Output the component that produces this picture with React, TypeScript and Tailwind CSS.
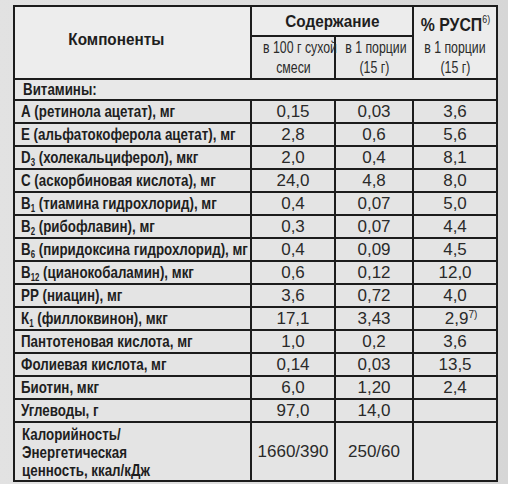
import React from "react";

type Row = {
  label: React.ReactNode;
  a: string;
  b: string;
  c?: React.ReactNode;
};

// the print uses a narrow grotesque; squeeze Liberation Sans to match
const Narrow = ({
  children,
  className = "origin-left scale-x-[0.785]",
}: {
  children: React.ReactNode;
  className?: string;
}) => <span className={`inline-block whitespace-nowrap ${className}`}>{children}</span>;

const mid = "origin-center scale-x-[0.77]";

const Sub = ({ children }: { children: React.ReactNode }) => (
  <span className="relative top-[3px] text-[10px]">{children}</span>
);

const rows: Row[] = [
  { label: "А (ретинола ацетат), мг", a: "0,15", b: "0,03", c: "3,6" },
  { label: "Е (альфатокоферола ацетат), мг", a: "2,8", b: "0,6", c: "5,6" },
  { label: <>D<Sub>3</Sub> (холекальциферол), мкг</>, a: "2,0", b: "0,4", c: "8,1" },
  { label: "С (аскорбиновая кислота), мг", a: "24,0", b: "4,8", c: "8,0" },
  { label: <>В<Sub>1</Sub> (тиамина гидрохлорид), мг</>, a: "0,4", b: "0,07", c: "5,0" },
  { label: <>В<Sub>2</Sub> (рибофлавин), мг</>, a: "0,3", b: "0,07", c: "4,4" },
  { label: <>В<Sub>6</Sub> (пиридоксина гидрохлорид), мг</>, a: "0,4", b: "0,09", c: "4,5" },
  { label: <>В<Sub>12</Sub> (цианокобаламин), мкг</>, a: "0,6", b: "0,12", c: "12,0" },
  { label: "РР (ниацин), мг", a: "3,6", b: "0,72", c: "4,0" },
  {
    label: <>К<Sub>1</Sub> (филлоквинон), мкг</>,
    a: "17,1",
    b: "3,43",
    c: (
      <span className="pl-[12px]">
        2,9<span className="relative -top-[6px] text-[10px]">7)</span>
      </span>
    ),
  },
  { label: "Пантотеновая кислота, мг", a: "1,0", b: "0,2", c: "3,6" },
  { label: "Фолиевая кислота, мг", a: "0,14", b: "0,03", c: "13,5" },
  { label: "Биотин, мкг", a: "6,0", b: "1,20", c: "2,4" },
  { label: "Углеводы, г", a: "97,0", b: "14,0" },
];

const cell = "border-2 border-[#1c1c1c] p-0";
const label = "font-['Liberation_Sans',sans-serif] font-bold text-[17px] text-[#1e1e1e]";
const num = "font-['Liberation_Sans',sans-serif] text-[17px] text-[#2a2a2a] text-center leading-none";
const small = "font-['Liberation_Sans',sans-serif] text-[16px] leading-[20px] text-[#2a2a2a]";

export default function App() {
  return (
    <div className="h-[484px] w-[508px] overflow-hidden bg-gradient-to-r from-[#e2e2e2] via-[#dedede] to-[#d6d6d6] pl-[13px] pt-[5px]">
      <table className="w-[483px] table-fixed border-collapse bg-[#e4e4e4]">
        <colgroup>
          <col className="w-[237px]" />
          <col className="w-[84px]" />
          <col className="w-[78px]" />
          <col className="w-[84px]" />
        </colgroup>
        <tbody>
          <tr className="h-[30px]">
            <td
              rowSpan={2}
              className={`${cell} ${label} bg-[#ededed] pb-[6px] pr-[32px] text-center text-[16px]`}
            >
              <Narrow className="origin-center scale-x-[0.9]">Компоненты</Narrow>
            </td>
            <td
              colSpan={2}
              className={`${cell} ${label} bg-[#ececec] pt-[2px] text-center text-[16px]`}
            >
              <Narrow className="origin-center scale-x-[0.9]">Содержание</Narrow>
            </td>
            <td rowSpan={2} className={`${cell} bg-[#ececec] text-center align-top`}>
              <div className="whitespace-nowrap pt-[8px] font-['Liberation_Sans',sans-serif] text-[18px] font-bold leading-[20px] text-[#1e1e1e]">
                <Narrow className="origin-center scale-x-[0.88]">
                  % РУСП
                  <span className="relative -top-[8px] text-[10px] font-normal">6)</span>
                </Narrow>
              </div>
              <div className={small}>
                <Narrow className={mid}>в 1 порции</Narrow>
                <br />
                <Narrow className={mid}>(15 г)</Narrow>
              </div>
            </td>
          </tr>
          <tr className="h-[41px]">
            <td className={`${cell} ${small} bg-[#e8e8e8] text-center`}>
              <Narrow className={mid}>в 100 г сухой</Narrow>
              <br />
              <Narrow className={mid}>смеси</Narrow>
            </td>
            <td className={`${cell} ${small} bg-[#e8e8e8] text-center`}>
              <Narrow className={mid}>в 1 порции</Narrow>
              <br />
              <Narrow className={mid}>(15 г)</Narrow>
            </td>
          </tr>
          <tr className="h-[21px]">
            <td colSpan={4} className={`${cell} ${label} bg-[#e8e8e8] pl-[8px] leading-none`}>
              <Narrow>Витамины:</Narrow>
            </td>
          </tr>
          {rows.map((r, i) => (
            <tr key={i} className="h-[23px]">
              <td className={`${cell} ${label} pl-[6px] leading-none`}>
                <Narrow>{r.label}</Narrow>
              </td>
              <td className={`${cell} ${num}`}>{r.a}</td>
              <td className={`${cell} ${num}`}>{r.b}</td>
              <td className={`${cell} ${num}`}>{r.c}</td>
            </tr>
          ))}
          <tr className="h-[59px]">
            <td className={`${cell} ${label} pl-[7px] pt-[2px] text-[16px] leading-[18px]`}>
              <Narrow>Калорийность/</Narrow>
              <br />
              <Narrow>Энергетическая</Narrow>
              <br />
              <Narrow>ценность, ккал/кДж</Narrow>
            </td>
            <td className={`${cell} ${num}`}>1660/390</td>
            <td className={`${cell} ${num}`}>250/60</td>
            <td className={cell}></td>
          </tr>
        </tbody>
      </table>
    </div>
  );
}
